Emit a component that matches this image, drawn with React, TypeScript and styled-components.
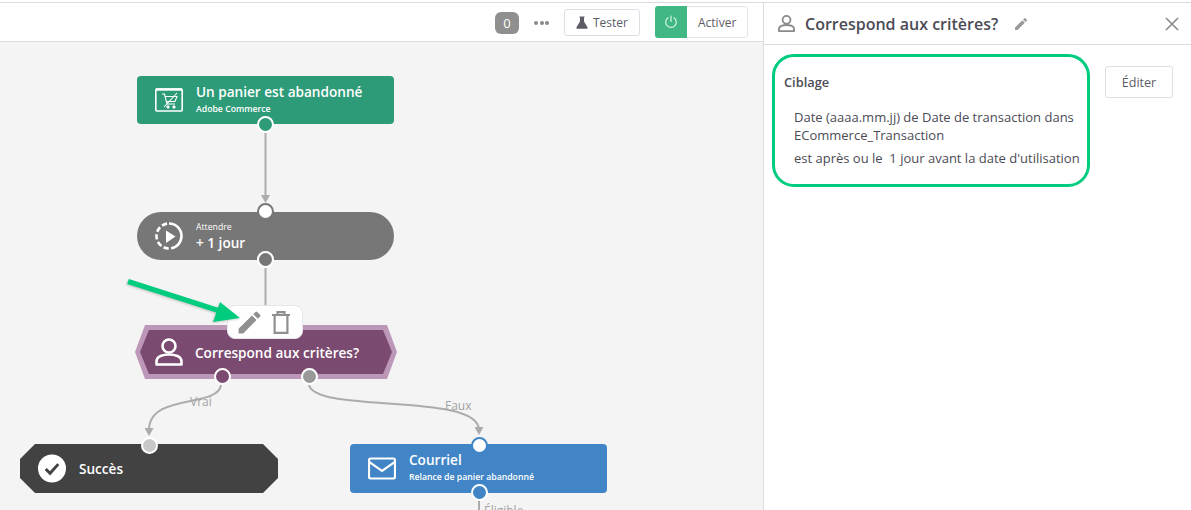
import React from "react";
import styled, { createGlobalStyle } from "styled-components";

const GlobalStyle = createGlobalStyle`
  html, body {
    margin: 0;
    padding: 0;
    background: #fff;
    font-family: "Open Sans", "Liberation Sans", sans-serif;
  }
`;

const Page = styled.div`
  display: flex;
  width: 1191px;
  height: 510px;
  overflow: hidden;
  padding-top: 2px;
  box-sizing: border-box;
`;

const Main = styled.div`
  width: 763px;
  display: flex;
  flex-direction: column;
  border-top: 1px solid #dcdcdc;
`;

const Toolbar = styled.div`
  height: 38px;
  display: flex;
  align-items: center;
  justify-content: flex-end;
  padding-right: 15px;
  border-bottom: 1px solid #dcdcdc;
  background: #fff;
  flex: none;
`;

const CountBadge = styled.div`
  width: 24px;
  height: 22px;
  margin-top: 2px;
  border-radius: 6px;
  background: #8f8f8f;
  color: #fff;
  font-size: 13px;
  display: flex;
  align-items: center;
  justify-content: center;
`;

const Dots = styled.div`
  display: flex;
  gap: 1.5px;
  margin: 2px 15px 0;
`;

const Dot = styled.span`
  width: 4px;
  height: 4px;
  border-radius: 50%;
  background: #8a8a8a;
`;

const TestButton = styled.div`
  width: 76px;
  height: 27px;
  margin-top: 1px;
  margin-right: 15px;
  box-sizing: border-box;
  border: 1px solid #dcdfe6;
  border-radius: 3px;
  display: flex;
  align-items: center;
  justify-content: center;
  gap: 5px;
  font-size: 12px;
  color: #5c5c66;
`;

const ActivateButton = styled.div`
  width: 93px;
  height: 32px;
  box-sizing: border-box;
  border: 1px solid #e2e4ea;
  border-radius: 3px;
  display: flex;
  align-items: center;
  font-size: 12px;
  color: #5c5c66;
`;

const PowerBox = styled.div`
  width: 32px;
  height: 32px;
  margin: -1px 0 -1px -1px;
  background: #41b883;
  border-radius: 3px 0 0 3px;
  display: flex;
  align-items: center;
  justify-content: center;
`;

const ActivateLabel = styled.span`
  margin-left: 11px;
`;

const Canvas = styled.div`
  position: relative;
  flex: 1;
  background: #f4f4f4;
  overflow: hidden;
`;

const Wires = styled.svg`
  position: absolute;
  left: 0;
  top: -42px;
  width: 764px;
  height: 510px;
  z-index: 1;
`;

const Node = styled.div<{ $x: number; $y: number }>`
  position: absolute;
  left: ${(p) => p.$x}px;
  top: ${(p) => p.$y - 42}px;
  width: 257px;
  height: 48px;
  display: flex;
  align-items: center;
  color: #fff;
  z-index: 2;
`;

const TriggerNode = styled(Node)`
  background: #2d9b78;
  border-radius: 4px;
`;

const WaitNode = styled(Node)`
  background: #777;
  border-radius: 24px;
`;

const EmailNode = styled(Node)`
  height: 49px;
  background: #4185c6;
  border-radius: 4px;
`;

const EndNode = styled(Node)`
  width: 258px;
  height: 49px;
  background: #424242;
  clip-path: polygon(15px 0, calc(100% - 15px) 0, 100% 15px, 100% calc(100% - 15px), calc(100% - 15px) 100%, 15px 100%, 0 calc(100% - 15px), 0 15px);
`;

const DecisionOuter = styled(Node)`
  width: 262px;
  height: 54px;
  background: #bd97b8;
  clip-path: polygon(10px 0, calc(100% - 10px) 0, 100% 50%, calc(100% - 10px) 100%, 10px 100%, 0 50%);
`;

const DecisionInner = styled.div`
  position: absolute;
  inset: 5px;
  display: flex;
  align-items: center;
  background: #7b4a70;
  clip-path: polygon(9px 0, calc(100% - 9px) 0, 100% 50%, calc(100% - 9px) 100%, 9px 100%, 0 50%);
`;

const IconSlot = styled.div<{ $left: number; $gap?: number }>`
  width: 28px;
  margin-left: ${(p) => p.$left}px;
  margin-right: ${(p) => p.$gap ?? 13}px;
  display: flex;
  align-items: center;
  flex: none;
`;

const NodeText = styled.div`
  display: flex;
  flex-direction: column;
  margin-bottom: 4px;
`;

const WaitText = styled.div`
  display: flex;
  flex-direction: column;
  margin-top: 1px;
`;

const NodeTitle = styled.div`
  font-size: 13.6px;
  font-weight: 600;
  line-height: 19px;
  white-space: nowrap;
`;

const NodeSub = styled.div`
  margin-top: 2px;
  font-size: 8.7px;
  font-weight: 600;
  line-height: 12px;
  white-space: nowrap;
`;

const WaitLabel = styled.div`
  font-size: 8.7px;
  line-height: 11px;
  margin-top: 1px;
`;

const Port = styled.div<{ $x: number; $y: number; $fill: string; $ring: string }>`
  position: absolute;
  left: ${(p) => p.$x - 8}px;
  top: ${(p) => p.$y - 50}px;
  width: 17px;
  height: 17px;
  box-sizing: border-box;
  border-radius: 50%;
  background: ${(p) => p.$fill};
  border: 2px solid ${(p) => p.$ring};
  z-index: 3;
`;

const WireLabel = styled.div<{ $x: number; $y: number }>`
  position: absolute;
  left: ${(p) => p.$x}px;
  top: ${(p) => p.$y - 42}px;
  font-size: 12px;
  line-height: 16px;
  color: #a3a3a3;
  z-index: 2;
`;

const NodeMenu = styled.div`
  position: absolute;
  left: 227px;
  top: 263px;
  width: 76px;
  height: 34px;
  box-sizing: border-box;
  padding-left: 7px;
  background: #fff;
  border: 1px solid #e6e6ee;
  border-radius: 8px;
  display: flex;
  align-items: center;
  gap: 8px;
  z-index: 4;
`;

const Callout = styled.svg`
  position: absolute;
  left: 120px;
  top: 228px;
  width: 130px;
  height: 60px;
  z-index: 5;
  filter: drop-shadow(-1px 1px 1px rgba(0, 0, 0, 0.18));
`;

const Panel = styled.aside`
  width: 428px;
  box-sizing: border-box;
  border-left: 1px solid #dcdcdc;
  border-top: 1px solid #dcdcdc;
  display: flex;
  flex-direction: column;
`;

const PanelHeader = styled.header`
  height: 42px;
  flex: none;
  box-sizing: border-box;
  border-bottom: 1px solid #dcdcdc;
  display: flex;
  align-items: center;
  padding: 0 12px 0 14px;
`;

const PanelTitle = styled.h2`
  margin: 0 15px 0 10px;
  font-size: 16px;
  font-weight: 600;
  color: #4b4b55;
`;

const CloseIcon = styled.svg`
  margin-left: auto;
`;

const PanelBody = styled.div`
  display: flex;
  align-items: flex-start;
  padding: 9px 18px 0 8px;
  justify-content: space-between;
`;

const Highlight = styled.section`
  width: 318px;
  height: 133px;
  box-sizing: border-box;
  border: 3px solid #00cc7e;
  border-radius: 22px;
  padding: 16px 0 0 9px;
  color: #4b4b55;
`;

const SectionTitle = styled.div`
  font-size: 12.8px;
  font-weight: 600;
  line-height: 18px;
  margin-bottom: 17px;
`;

const Rule = styled.p<{ $gap?: number }>`
  margin: ${(p) => p.$gap ?? 0}px 0 0 10px;
  font-size: 13px;
  line-height: 18px;
  white-space: pre-wrap;
`;

const EditButton = styled.div`
  width: 68px;
  height: 32px;
  margin-top: 12px;
  box-sizing: border-box;
  border: 1px solid #dcdfe6;
  border-radius: 3px;
  display: flex;
  align-items: center;
  justify-content: center;
  font-size: 12.5px;
  color: #5c5c66;
`;

const PersonIcon = ({ size, color, width }: { size: number; color: string; width: number }) => (
  <svg width={size} height={size} viewBox="0 0 28 28" fill="none" stroke={color} strokeWidth={width} strokeLinejoin="round">
    <circle cx="14" cy="8" r="6.5" />
    <path d="M1.5 26.5v-2.5c0-3 1.5-5 4-6c2.5-1 5-1.5 8.5-1.5s6 .5 8.5 1.5c2.5 1 4 3 4 6v2.5z" />
  </svg>
);

const PencilIcon = ({ size, color }: { size: number; color: string }) => (
  <svg width={size} height={size} viewBox="0 0 24 24" fill={color}>
    <path d="M3 17.25V21h3.75L17.81 9.94l-3.75-3.75L3 17.25zM20.71 7.04a1 1 0 0 0 0-1.41l-2.34-2.34a1 1 0 0 0-1.41 0l-1.83 1.83 3.75 3.75 1.83-1.83z" />
  </svg>
);

const App = () => (
  <>
    <GlobalStyle />
    <Page>
      <Main>
        <Toolbar>
          <CountBadge>0</CountBadge>
          <Dots>
            <Dot />
            <Dot />
            <Dot />
          </Dots>
          <TestButton>
            <svg width="12" height="13" viewBox="0 0 12 13" fill="#5c5c66">
              <path d="M3.5 .5h5v1H8v4l3.6 6c.3.6 0 1.2-.7 1.2H1.1c-.7 0-1-.6-.7-1.2L4 5.5v-4h-.5z" />
            </svg>
            Tester
          </TestButton>
          <ActivateButton>
            <PowerBox>
              <svg width="14" height="14" viewBox="0 0 14 14" fill="none" stroke="#d5f3e5" strokeWidth="1.2" strokeLinecap="round">
                <path d="M7 1v5.5M4 2.8a5.3 5.3 0 1 0 6 0" />
              </svg>
            </PowerBox>
            <ActivateLabel>Activer</ActivateLabel>
          </ActivateButton>
        </Toolbar>
        <Canvas>
          <Wires viewBox="0 0 764 510" fill="none" stroke="#acacac" strokeWidth="2">
            <path d="M265.5 133V198" />
            <path d="M265.5 268V320" />
            <path d="M221 385C218 408 149 393 149 430" />
            <path d="M309 385C316 414 479 392 479 430" />
            <path d="M479 500V510" />
            <path d="M261 195h9l-4.5 8z" fill="#acacac" stroke="none" />
            <path d="M144.5 428h9l-4.5 8z" fill="#acacac" stroke="none" />
            <path d="M474.5 427h9l-4.5 8z" fill="#acacac" stroke="none" />
          </Wires>

          <TriggerNode $x={137} $y={76}>
            <IconSlot $left={18}>
              <svg width="28" height="24" viewBox="0 0 28 24" fill="none" stroke="#fff">
                <rect x="0.8" y="1" width="26.4" height="22" rx="1" strokeWidth="1.6" />
                <path d="M1 1.5h26" strokeWidth="2.4" />
                <path d="M7 6h2.5l2.5 10h8M10.5 8.5H22l-2 5h-8.5M9 19 22 5" strokeWidth="1.1" />
                <circle cx="13" cy="19" r="1.2" fill="#fff" />
                <circle cx="19" cy="19" r="1.2" fill="#fff" />
              </svg>
            </IconSlot>
            <NodeText>
              <NodeTitle>Un panier est abandonné</NodeTitle>
              <NodeSub>Adobe Commerce</NodeSub>
            </NodeText>
          </TriggerNode>

          <WaitNode $x={137} $y={212}>
            <IconSlot $left={18}>
              <svg width="28" height="28" viewBox="0 0 28 28" fill="none">
                <circle
                  cx="14"
                  cy="14"
                  r="12.5"
                  stroke="#fff"
                  strokeWidth="2.6"
                  strokeDasharray="36.8 2.5 5.35 2.5 5.35 2.5 5.35 2.5 5.35 2.5 5.35 2.5"
                  transform="rotate(-90 14 14)"
                />
                <path d="M11 8.5 20.5 14.5 11 21z" fill="#fff" />
              </svg>
            </IconSlot>
            <WaitText>
              <WaitLabel>Attendre</WaitLabel>
              <NodeTitle>+ 1 jour</NodeTitle>
            </WaitText>
          </WaitNode>

          <DecisionOuter $x={135} $y={325}>
            <DecisionInner>
              <IconSlot $left={15} $gap={12}>
                <PersonIcon size={28} color="#fff" width={2.6} />
              </IconSlot>
              <NodeTitle>Correspond aux critères?</NodeTitle>
            </DecisionInner>
          </DecisionOuter>

          <EndNode $x={20} $y={444}>
            <IconSlot $left={18}>
              <svg width="29" height="29" viewBox="0 0 29 29">
                <circle cx="14.5" cy="14.5" r="14.5" fill="#fff" />
                <path d="M8 15l4.5 4.5L21 10" fill="none" stroke="#424242" strokeWidth="3" />
              </svg>
            </IconSlot>
            <NodeTitle>Succès</NodeTitle>
          </EndNode>

          <EmailNode $x={350} $y={444}>
            <IconSlot $left={18}>
              <svg width="29" height="23" viewBox="0 0 29 23" fill="none" stroke="#fff" strokeWidth="2.2">
                <rect x="1.1" y="1.1" width="26.8" height="20.8" rx="1.5" />
                <path d="M1.5 5 14.5 14 27.5 5" />
              </svg>
            </IconSlot>
            <NodeText>
              <NodeTitle>Courriel</NodeTitle>
              <NodeSub>Relance de panier abandonné</NodeSub>
            </NodeText>
          </EmailNode>

          <Port $x={265} $y={124} $fill="#2d9b78" $ring="#fff" />
          <Port $x={265} $y={211} $fill="#fff" $ring="#777" />
          <Port $x={265} $y={259} $fill="#777" $ring="#fff" />
          <Port $x={222} $y={376} $fill="#7b4a70" $ring="#fff" />
          <Port $x={309} $y={376} $fill="#999" $ring="#fff" />
          <Port $x={149} $y={445} $fill="#c8c8c8" $ring="#fff" />
          <Port $x={479} $y={445} $fill="#fff" $ring="#4185c6" />
          <Port $x={479} $y={492} $fill="#4185c6" $ring="#fff" />

          <WireLabel $x={190} $y={394}>Vrai</WireLabel>
          <WireLabel $x={445} $y={398}>Faux</WireLabel>
          <WireLabel $x={484} $y={503}>Éligible</WireLabel>

          <NodeMenu>
            <PencilIcon size={29} color="#8f8f8f" />
            <svg width="18" height="23" viewBox="0 0 18 23" fill="none" stroke="#8f8f8f" strokeWidth="2.2">
              <path d="M0 4h18M5.5 4V1.2h7V4M2.6 4v17.8h12.8V4" />
            </svg>
          </NodeMenu>

          <Callout viewBox="0 0 130 60">
            <path d="M8 11.5 103 42" stroke="#00cc7e" strokeWidth="5.5" fill="none" />
            <path d="M120 48 93 52 100 32z" fill="#00cc7e" />
          </Callout>
        </Canvas>
      </Main>
      <Panel>
        <PanelHeader>
          <PersonIcon size={17} color="#8a8a8a" width={3} />
          <PanelTitle>Correspond aux critères?</PanelTitle>
          <PencilIcon size={16} color="#9a9a9a" />
          <CloseIcon width="14" height="14" viewBox="0 0 14 14" stroke="#8a8a8a" strokeWidth="1.6">
            <path d="M1 1l12 12M13 1 1 13" />
          </CloseIcon>
        </PanelHeader>
        <PanelBody>
          <Highlight>
            <SectionTitle>Ciblage</SectionTitle>
            <Rule>Date (aaaa.mm.jj) de Date de transaction dans ECommerce_Transaction</Rule>
            <Rule $gap={5}>est après ou le  1 jour avant la date d'utilisation</Rule>
          </Highlight>
          <EditButton>Éditer</EditButton>
        </PanelBody>
      </Panel>
    </Page>
  </>
);

export default App;
